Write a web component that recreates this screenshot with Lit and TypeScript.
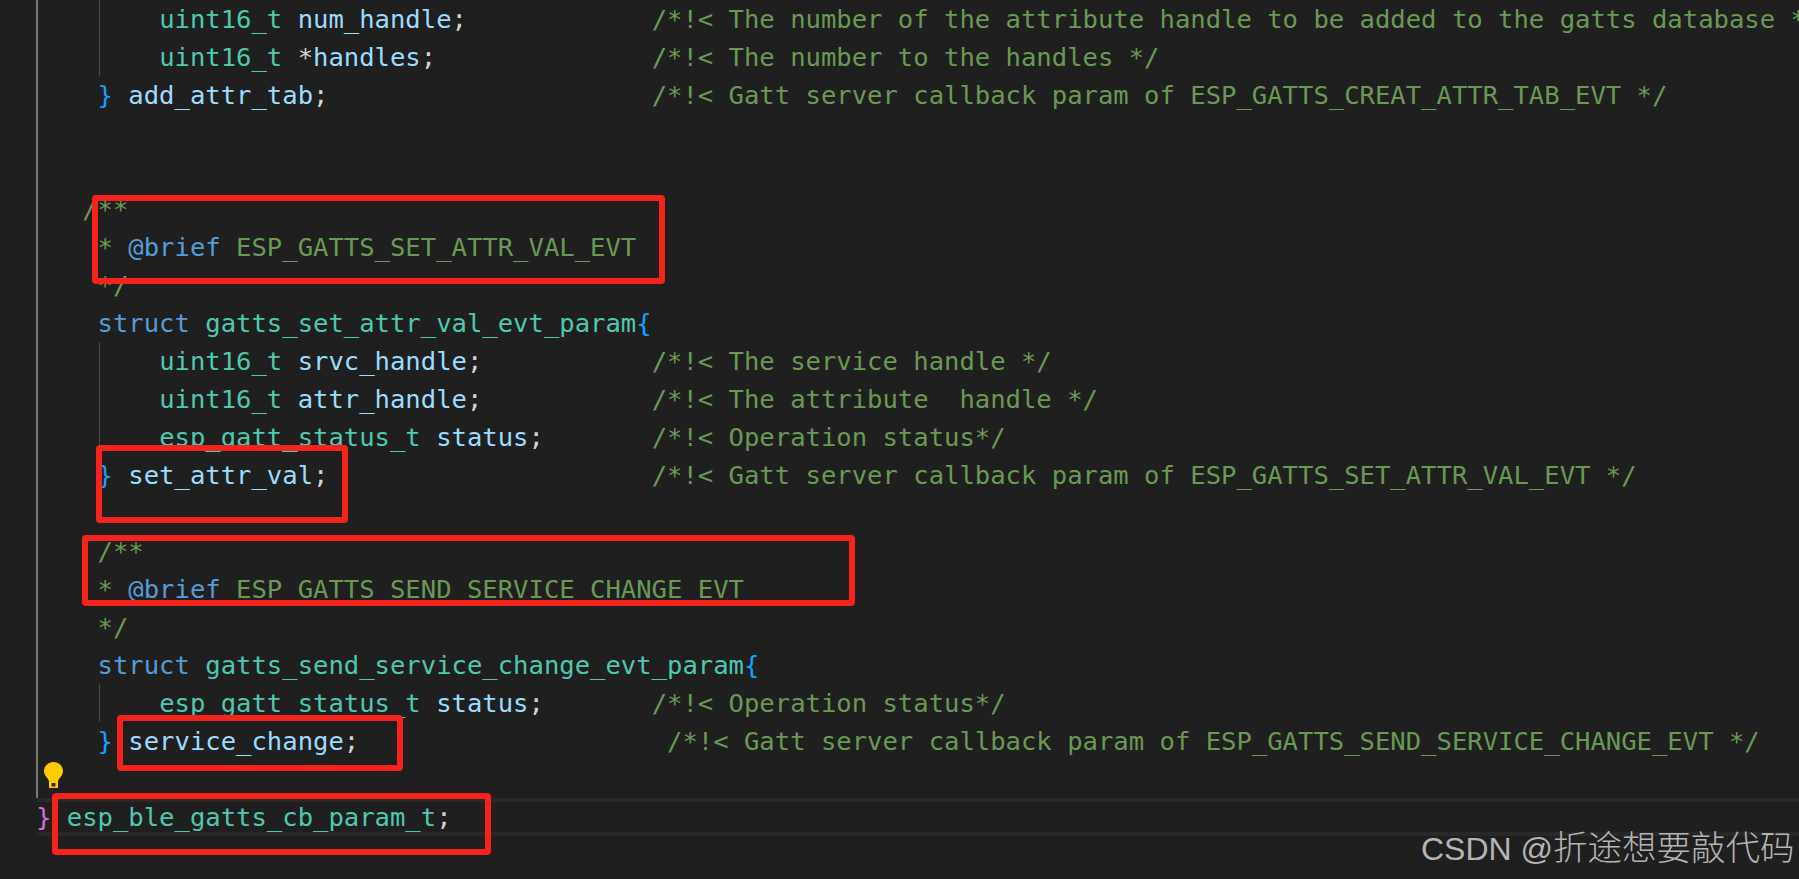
import { LitElement, html, css } from "lit";
import { customElement } from "lit/decorators.js";

type Tok = [string, string];
interface Line { t: Tok[]; c?: string; col?: number; guide?: boolean; cur?: boolean; }

const ty = (s: string): Tok => ["ty", s];
const va = (s: string): Tok => ["va", s];
const pu = (s: string): Tok => ["pu", s];
const br = (s: string): Tok => ["br", s];
const kw = (s: string): Tok => ["kw", s];
const cm = (s: string): Tok => ["cm", s];
const sp = (n: number): Tok => ["pu", " ".repeat(n)];

const LINES: Line[] = [
  { t: [sp(8), ty("uint16_t"), sp(1), va("num_handle"), pu(";")], c: "/*!< The number of the attribute handle to be added to the gatts database */", guide: true },
  { t: [sp(8), ty("uint16_t"), pu(" *"), va("handles"), pu(";")], c: "/*!< The number to the handles */", guide: true },
  { t: [sp(4), br("}"), sp(1), va("add_attr_tab"), pu(";")], c: "/*!< Gatt server callback param of ESP_GATTS_CREAT_ATTR_TAB_EVT */" },
  { t: [] },
  { t: [] },
  { t: [sp(3), cm("/**")] },
  { t: [sp(4), cm("* "), kw("@brief"), cm(" ESP_GATTS_SET_ATTR_VAL_EVT")] },
  { t: [sp(4), cm("*/")] },
  { t: [sp(4), kw("struct"), sp(1), ty("gatts_set_attr_val_evt_param"), br("{")] },
  { t: [sp(8), ty("uint16_t"), sp(1), va("srvc_handle"), pu(";")], c: "/*!< The service handle */", guide: true },
  { t: [sp(8), ty("uint16_t"), sp(1), va("attr_handle"), pu(";")], c: "/*!< The attribute  handle */", guide: true },
  { t: [sp(8), ty("esp_gatt_status_t"), sp(1), va("status"), pu(";")], c: "/*!< Operation status*/", guide: true },
  { t: [sp(4), br("}"), sp(1), va("set_attr_val"), pu(";")], c: "/*!< Gatt server callback param of ESP_GATTS_SET_ATTR_VAL_EVT */" },
  { t: [] },
  { t: [sp(4), cm("/**")] },
  { t: [sp(4), cm("* "), kw("@brief"), cm(" ESP_GATTS_SEND_SERVICE_CHANGE_EVT")] },
  { t: [sp(4), cm("*/")] },
  { t: [sp(4), kw("struct"), sp(1), ty("gatts_send_service_change_evt_param"), br("{")] },
  { t: [sp(8), ty("esp_gatt_status_t"), sp(1), va("status"), pu(";")], c: "/*!< Operation status*/", guide: true },
  { t: [sp(4), br("}"), sp(1), va("service_change"), pu(";")], c: "/*!< Gatt server callback param of ESP_GATTS_SEND_SERVICE_CHANGE_EVT */", col: 41 },
  { t: [] },
  { t: [["ma", "}"], sp(1), ty("esp_ble_gatts_cb_param_t"), pu(";")], cur: true },
];

const BOXES = [
  { x: 92, y: 195, r: 665, b: 284 },
  { x: 96, y: 445, r: 348, b: 523 },
  { x: 82, y: 535, r: 855, b: 606 },
  { x: 117, y: 715, r: 403, b: 771 },
  { x: 52, y: 793, r: 491, b: 855 },
];

@customElement("app-root")
export class AppRoot extends LitElement {
  static styles = css`
    :host { display: block; position: relative; height: 879px; overflow: hidden; background: #1f1f1f; }
    .code {
      margin-left: 36px; font-family: "DejaVu Sans Mono", monospace;
      font-size: 25.57px; line-height: 38px; white-space: pre;
    }
    .line { position: relative; height: 38px; background: linear-gradient(#787878, #787878) 0 0 / 2px 100% no-repeat; }
    .line.guide::before { content: ""; position: absolute; left: 63px; top: 0; bottom: 0; width: 1px; background: #484848; }
    .line.cur { background: none; box-shadow: inset 0 4px 0 #282828, inset 0 -4px 0 #282828; }
    .ty { color: #4ec9b0; } .va { color: #9cdcfe; } .pu { color: #d4d4d4; }
    .br { color: #179fff; } .kw { color: #569cd6; } .cm { color: #6a9955; } .ma { color: #da70d6; }
    .box { position: absolute; box-sizing: border-box; border: 6px solid #f4231c; border-radius: 4px; }
    .bulb { position: absolute; left: 44px; top: 762px; width: 19px; height: 26px; }
    .mark {
      position: absolute; left: 1421px; top: 822px; color: #b4b4b4; white-space: nowrap; line-height: 46px;
      font-family: "Liberation Sans", "Noto Sans CJK SC", sans-serif; font-size: 32px;
    }
    .mark span { font-family: "Noto Sans CJK SC", sans-serif; font-size: 34.5px; font-weight: 300; }
  `;

  private row(l: Line) {
    const len = l.t.reduce((n, [, s]) => n + s.length, 0);
    const pad = l.c ? " ".repeat(Math.max(1, (l.col ?? 40) - len)) : "";
    const cls = "line" + (l.guide ? " guide" : "") + (l.cur ? " cur" : "");
    return html`<div class=${cls}>${l.t.map(([k, s]) => html`<span class=${k}>${s}</span>`)}${pad}${l.c ? html`<span class="cm">${l.c}</span>` : ""}</div>`;
  }

  render() {
    return html`
      <div class="code">${LINES.map((l) => this.row(l))}</div>
      ${BOXES.map((b) => html`<div class="box" style="left:${b.x}px;top:${b.y}px;width:${b.r - b.x}px;height:${b.b - b.y}px"></div>`)}
      <svg class="bulb" viewBox="0 0 19 26">
        <path fill="#ffcc00" d="M9.500 0C4.200 0 0 4 0 9c0 3.400 2 5.600 3.600 7.400.9 1 1.400 2.200 1.400 3.600h9c0-1.400.5-2.600 1.400-3.600C17 14.600 19 12.400 19 9c0-5-4.200-9-9.500-9z"/>
        <path fill="#ffcc00" d="M5 19h9v7H5z"/><path fill="#2a2410" d="M7.500 21h4v3.500h-4z"/>
      </svg>
      <div class="mark">CSDN @<span>折途想要敲代码</span></div>
    `;
  }
}
